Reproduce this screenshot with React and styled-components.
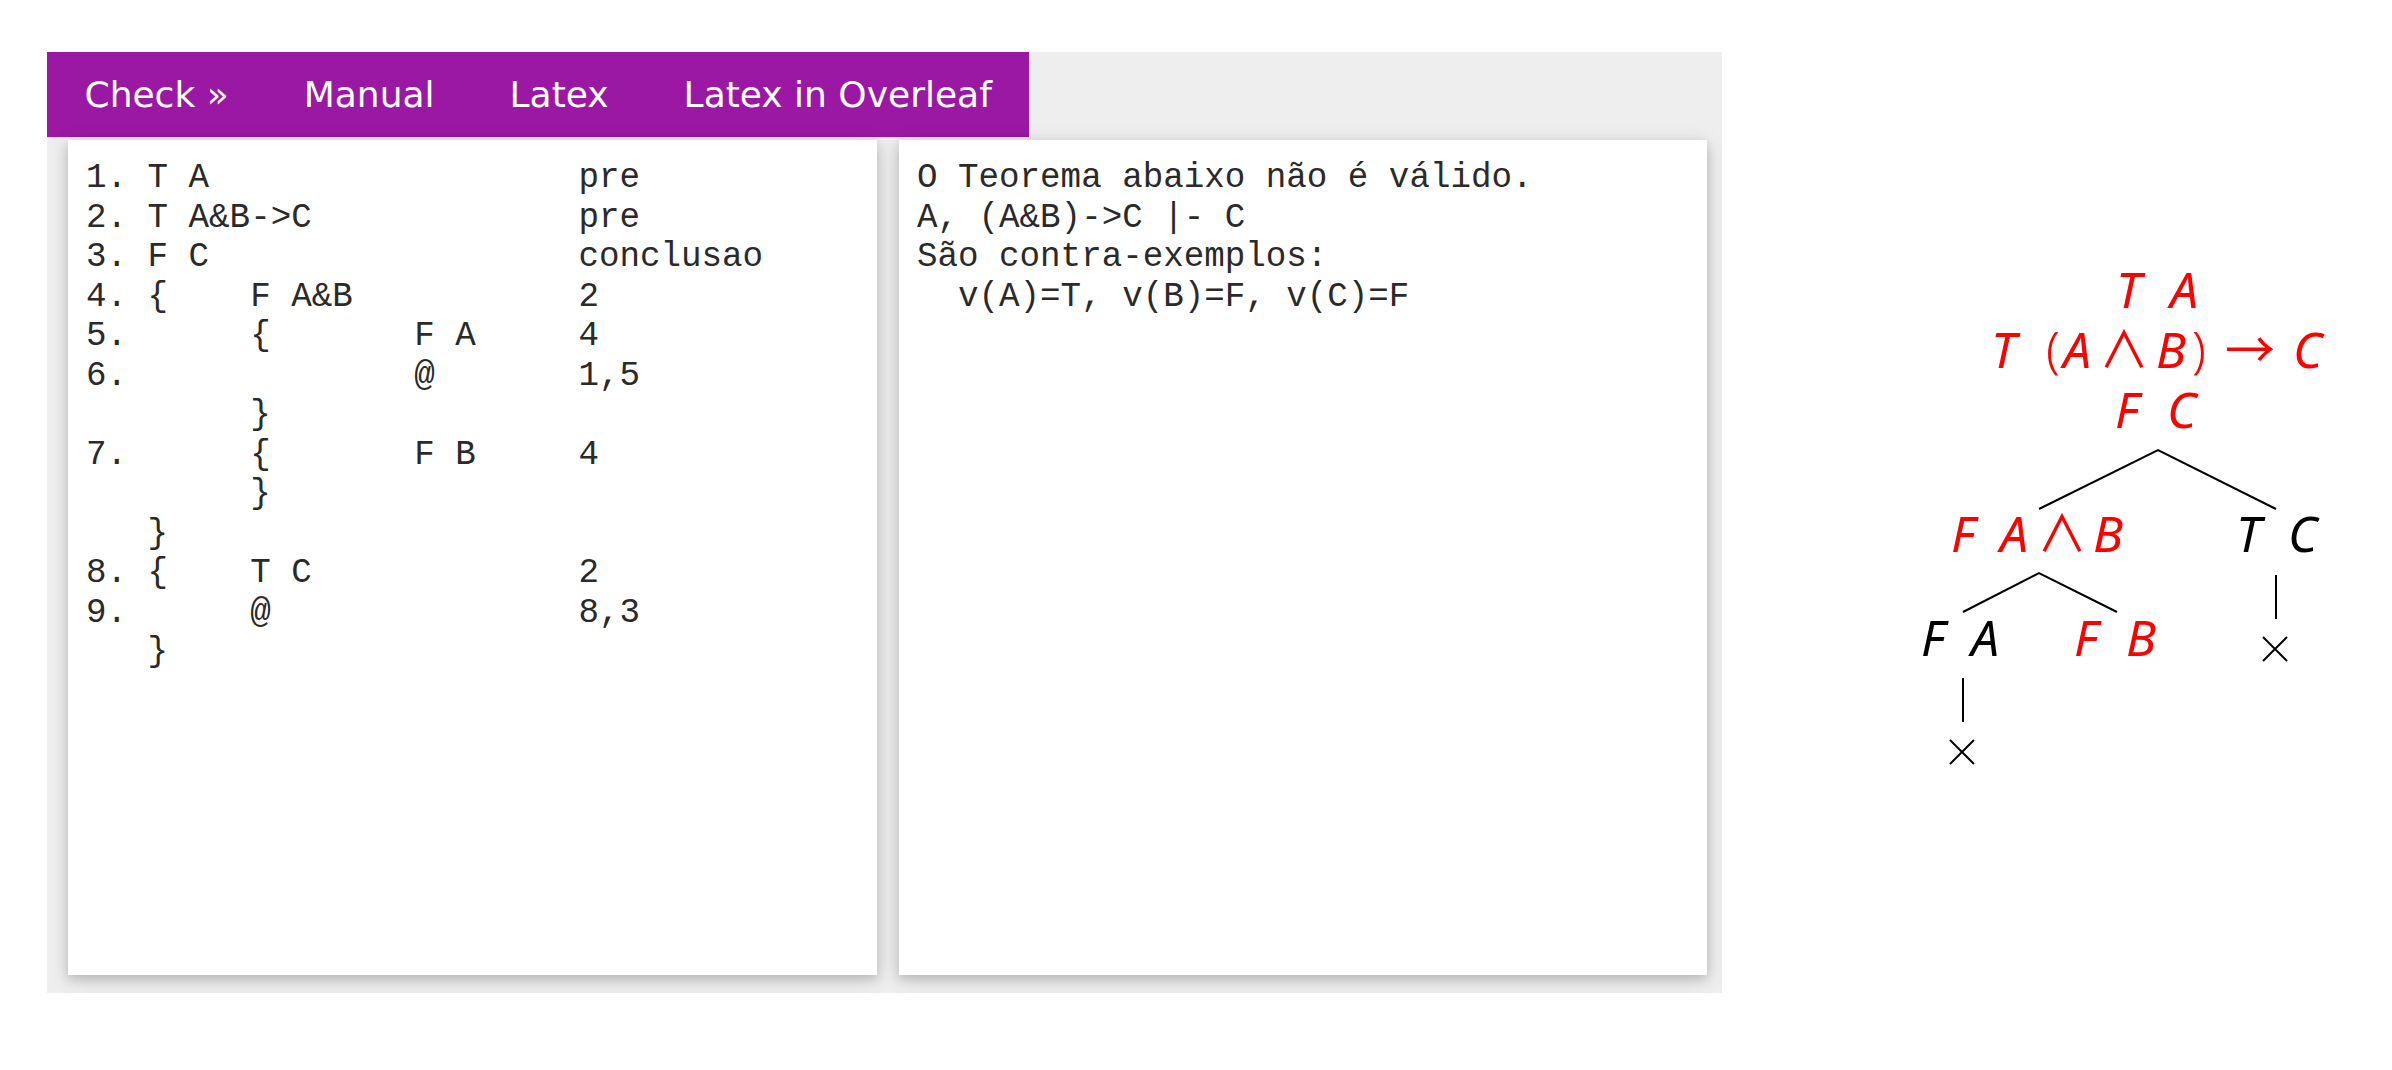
import React from "react";
import styled, { createGlobalStyle } from "styled-components";

const GlobalStyle = createGlobalStyle`
  body {
    margin: 0;
    background: #ffffff;
  }
`;

const Page = styled.div`
  display: flex;
  align-items: flex-start;
  padding: 52px 0 0 47px;
`;

const Workspace = styled.div`
  width: 1675px;
  height: 941px;
  background: #eeeeee;
  flex-shrink: 0;
`;

const NavBar = styled.div`
  display: inline-flex;
  height: 85px;
  background: #9b18a4;
`;

const NavItem = styled.div`
  display: flex;
  align-items: center;
  padding: 0 37.5px;
  color: #ffffff;
  font-family: "DejaVu Sans", Verdana, sans-serif;
  font-size: 36px;
  cursor: pointer;
`;

const Panels = styled.div`
  display: grid;
  grid-template-columns: 809px 808px;
  gap: 22px;
  padding: 3px 14px 0 21px;
`;

const Card = styled.div`
  height: 835px;
  background: #ffffff;
  box-shadow: 0 4px 10px 0 rgba(0, 0, 0, 0.16), 0 4px 20px 0 rgba(0, 0, 0, 0.12);
`;

const Listing = styled.pre`
  margin: 0;
  padding: 19px 18px;
  font-family: "Liberation Mono", "Courier New", monospace;
  font-size: 34.2px;
  line-height: 39.5px;
  color: #2a2a2a;
`;

const TreeFigure = styled.svg`
  flex-shrink: 0;
  margin: 188px 0 0 158px;
  overflow: visible;
`;

const Label = styled.text`
  font-family: "Noto Sans", "DejaVu Sans", sans-serif;
  font-style: italic;
  font-size: 50px;
  fill: ${(p) => (p.$open ? "#ff0000" : "#000000")};
`;

const Op = styled.tspan`
  font-family: "Noto Sans CJK JP", "DejaVu Sans", sans-serif;
  font-style: normal;
  font-size: 50px;
`;

const Paren = styled.tspan`
  font-style: normal;
  font-weight: 300;
`;

// each cell: [column, text]
const at = (cells) =>
  cells.reduce((line, [col, text]) => line.padEnd(col) + text, "");

const proof = [
  [[0, "1."], [3, "T A"], [24, "pre"]],
  [[0, "2."], [3, "T A&B->C"], [24, "pre"]],
  [[0, "3."], [3, "F C"], [24, "conclusao"]],
  [[0, "4."], [3, "{"], [8, "F A&B"], [24, "2"]],
  [[0, "5."], [8, "{"], [16, "F A"], [24, "4"]],
  [[0, "6."], [16, "@"], [24, "1,5"]],
  [[8, "}"]],
  [[0, "7."], [8, "{"], [16, "F B"], [24, "4"]],
  [[8, "}"]],
  [[3, "}"]],
  [[0, "8."], [3, "{"], [8, "T C"], [24, "2"]],
  [[0, "9."], [8, "@"], [24, "8,3"]],
  [[3, "}"]],
]
  .map(at)
  .join("\n");

const result = `O Teorema abaixo não é válido.
A, (A&B)->C |- C
São contra-exemplos:
  v(A)=T, v(B)=F, v(C)=F`;

const Cross = ({ x, y }) => (
  <g stroke="#000" strokeWidth="2">
    <line x1={x - 12} y1={y - 12} x2={x + 12} y2={y + 12} />
    <line x1={x - 12} y1={y + 12} x2={x + 12} y2={y - 12} />
  </g>
);

// a signed formula: sign and letters placed by x
const Formula = ({ open, y, parts }) => (
  <Label $open={open} y={y}>
    {parts.map(([x, text, kind], i) =>
      kind === "op" ? (
        <Op key={i} x={x}>{text}</Op>
      ) : kind === "paren" ? (
        <Paren key={i} x={x}>{text}</Paren>
      ) : (
        <tspan key={i} x={x}>{text}</tspan>
      )
    )}
  </Label>
);

function Tableau() {
  return (
    <TreeFigure width="500" height="560" viewBox="0 0 500 560">
      <Formula open y={68} parts={[[236, "T"], [290, "A"]]} />
      <Formula
        open
        y={128}
        parts={[
          [111, "T"],
          [166, "(", "paren"],
          [183, "A"],
          [219, "∧", "op"],
          [276, "B"],
          [312, ")", "paren"],
          [345, "→", "op"],
          [413, "C"],
        ]}
      />
      <Formula open y={188} parts={[[235, "F"], [287, "C"]]} />

      <polyline points="159,269 278,210 396,269" fill="none" stroke="#000" strokeWidth="2" />

      <Formula
        open
        y={312}
        parts={[[71, "F"], [120, "A"], [157, "∧", "op"], [213, "B"]]}
      />
      <Formula y={312} parts={[[356, "T"], [408, "C"]]} />

      <polyline points="83,372 159,333 237,372" fill="none" stroke="#000" strokeWidth="2" />
      <line x1="396" y1="335" x2="396" y2="379" stroke="#000" strokeWidth="2" />
      <Cross x={395} y={409} />

      <Formula y={416} parts={[[41, "F"], [91, "A"]]} />
      <Formula open y={416} parts={[[194, "F"], [246, "B"]]} />

      <line x1="83" y1="438" x2="83" y2="482" stroke="#000" strokeWidth="2" />
      <Cross x={82} y={512} />
    </TreeFigure>
  );
}

export default function App() {
  return (
    <>
      <GlobalStyle />
      <Page>
        <Workspace>
          <NavBar>
            <NavItem>Check »</NavItem>
            <NavItem>Manual</NavItem>
            <NavItem>Latex</NavItem>
            <NavItem>Latex in Overleaf</NavItem>
          </NavBar>
          <Panels>
            <Card>
              <Listing>{proof}</Listing>
            </Card>
            <Card>
              <Listing>{result}</Listing>
            </Card>
          </Panels>
        </Workspace>
        <Tableau />
      </Page>
    </>
  );
}
